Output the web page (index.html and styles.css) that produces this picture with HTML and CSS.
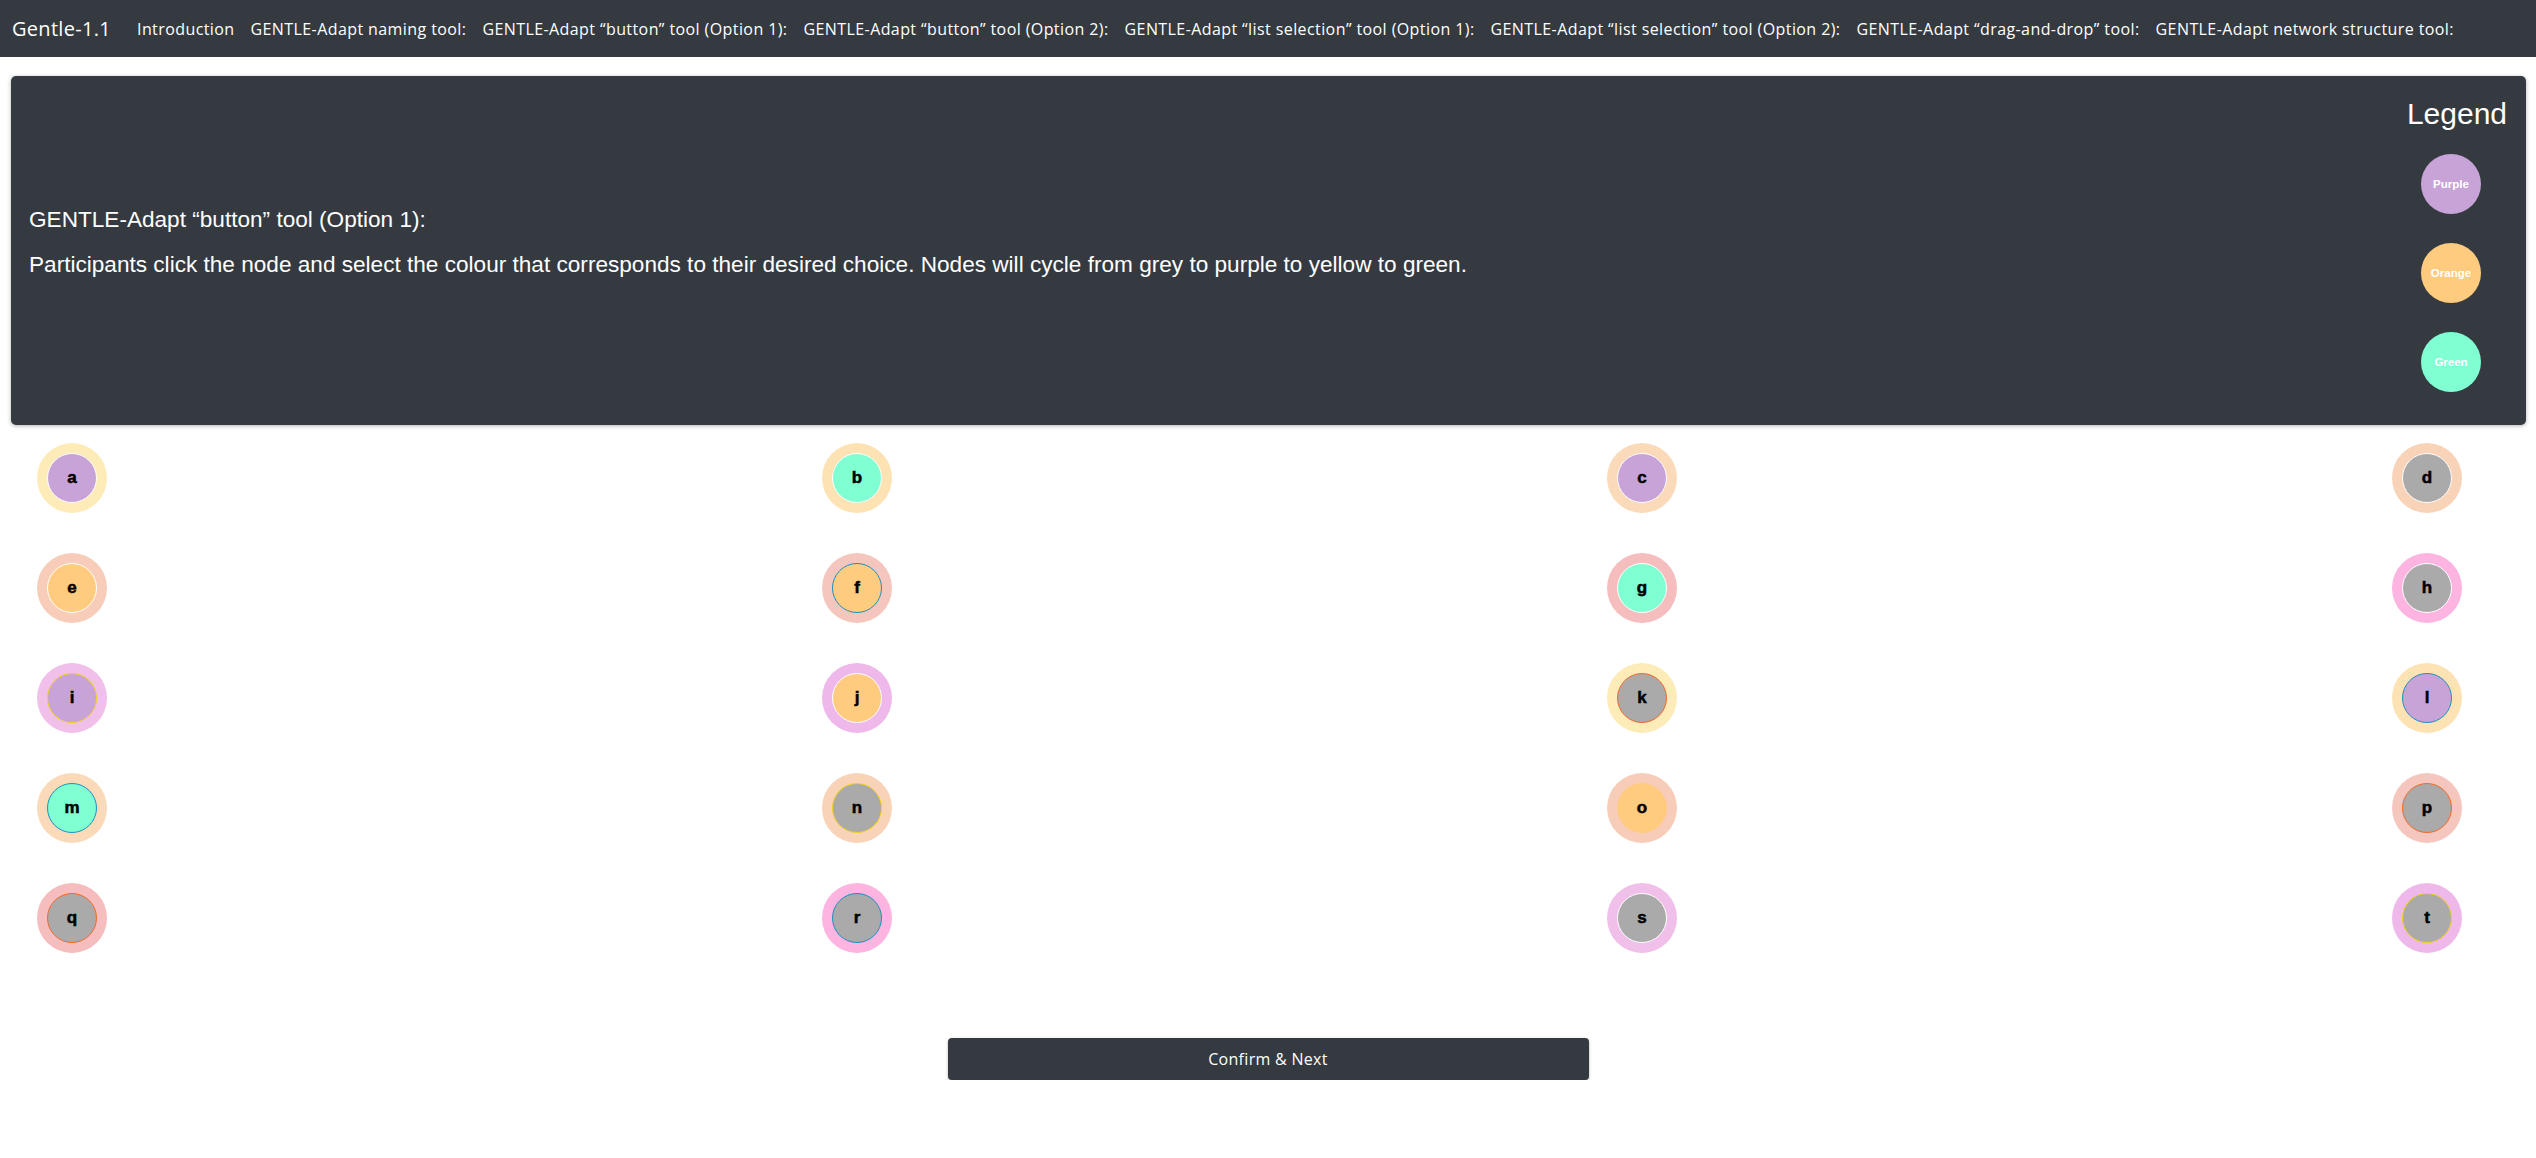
FILE: index.html
```html
<!DOCTYPE html>
<html lang="en">
<head>
<meta charset="utf-8">
<title>Gentle-1.1</title>
<link rel="stylesheet" href="styles.css">
</head>
<body>
<nav class="navbar">
  <a class="brand" href="#">Gentle-1.1</a>
  <ul class="nav">
    <li><a href="#">Introduction</a></li>
    <li><a href="#">GENTLE-Adapt naming tool:</a></li>
    <li><a href="#">GENTLE-Adapt “button” tool (Option 1):</a></li>
    <li><a href="#">GENTLE-Adapt “button” tool (Option 2):</a></li>
    <li><a href="#">GENTLE-Adapt “list selection” tool (Option 1):</a></li>
    <li><a href="#">GENTLE-Adapt “list selection” tool (Option 2):</a></li>
    <li><a href="#">GENTLE-Adapt “drag-and-drop” tool:</a></li>
    <li><a href="#">GENTLE-Adapt network structure tool:</a></li>
  </ul>
</nav>
<main>
  <section class="card">
    <div class="card-text">
      <h5 class="card-title">GENTLE-Adapt “button” tool (Option 1):</h5>
      <p class="card-desc">Participants click the node and select the colour that corresponds to their desired choice. Nodes will cycle from grey to purple to yellow to green.</p>
    </div>
    <aside class="legend">
      <h3 class="legend-title">Legend</h3>
      <div class="legend-dot fill-purple">Purple</div>
      <div class="legend-dot fill-orange">Orange</div>
      <div class="legend-dot fill-green">Green</div>
    </aside>
  </section>

  <div class="node-grid">
    <div class="node ring-1"><span class="core fill-purple edge-white">a</span></div>
    <div class="node ring-2"><span class="core fill-green edge-white">b</span></div>
    <div class="node ring-3"><span class="core fill-purple edge-white">c</span></div>
    <div class="node ring-4"><span class="core fill-grey edge-white">d</span></div>
    <div class="node ring-5"><span class="core fill-orange edge-white">e</span></div>
    <div class="node ring-6"><span class="core fill-orange edge-blue">f</span></div>
    <div class="node ring-7"><span class="core fill-green edge-white">g</span></div>
    <div class="node ring-8"><span class="core fill-grey edge-white">h</span></div>
    <div class="node ring-9"><span class="core fill-purple edge-yellow">i</span></div>
    <div class="node ring-10"><span class="core fill-orange edge-white">j</span></div>
    <div class="node ring-1"><span class="core fill-grey edge-red">k</span></div>
    <div class="node ring-2"><span class="core fill-purple edge-blue">l</span></div>
    <div class="node ring-3"><span class="core fill-green edge-blue">m</span></div>
    <div class="node ring-4"><span class="core fill-grey edge-yellow">n</span></div>
    <div class="node ring-5"><span class="core fill-orange edge-orange">o</span></div>
    <div class="node ring-6"><span class="core fill-grey edge-red">p</span></div>
    <div class="node ring-7"><span class="core fill-grey edge-red">q</span></div>
    <div class="node ring-8"><span class="core fill-grey edge-blue">r</span></div>
    <div class="node ring-9"><span class="core fill-grey edge-white">s</span></div>
    <div class="node ring-10"><span class="core fill-grey edge-yellow">t</span></div>
  </div>

  <div class="actions">
    <button class="btn" type="button">Confirm &amp; Next</button>
  </div>
</main>
</body>
</html>
```

FILE: styles.css
```css
html, body {
  margin: 0;
  padding: 0;
  background: #ffffff;
}

body {
  font-family: "Liberation Sans", Arial, sans-serif;
  color: #212529;
}

/* ---------- navbar ---------- */
.navbar {
  display: flex;
  align-items: center;
  height: 57px;
  box-sizing: border-box;
  padding: 0 12px;
  background: #343a40;
}

.brand {
  font-family: "Open Sans", "Liberation Sans", sans-serif;
  font-size: 20px;
  line-height: 30px;
  letter-spacing: 0.3px;
  color: #ffffff;
  text-decoration: none;
  margin-right: 18px;
  white-space: nowrap;
}

.nav {
  display: flex;
  list-style: none;
  margin: 0;
  padding: 0;
}

.nav a {
  display: block;
  padding: 8px;
  font-family: "Open Sans", "Liberation Sans", sans-serif;
  font-size: 16px;
  line-height: 24px;
  letter-spacing: 0.41px;
  color: #ffffff;
  text-decoration: none;
  white-space: nowrap;
}

/* ---------- card ---------- */
.card {
  display: flex;
  justify-content: space-between;
  margin: 19px 10px 0 11px;
  padding: 20px 19px 33px 18px;
  background: #343a40;
  border-radius: 5px;
  box-shadow: 0 1px 4px rgba(0, 0, 0, 0.3);
  color: #ffffff;
}

.card-text {
  align-self: center;
  padding-bottom: 4px;
}

.card-title {
  margin: 0 0 18px;
  font-size: 22.6px;
  line-height: 27px;
  font-weight: normal;
}

.card-desc {
  margin: 0;
  font-size: 22.6px;
  line-height: 27px;
}

.legend {
  display: flex;
  flex-direction: column;
  align-items: flex-end;
}

.legend-title {
  margin: 0;
  font-size: 30px;
  line-height: 36px;
  font-weight: normal;
}

.legend-dot {
  width: 60px;
  height: 60px;
  margin: 29px 26px 0 0;
  border-radius: 50%;
  display: flex;
  align-items: center;
  justify-content: center;
  font-size: 11.5px;
  font-weight: bold;
  color: #ffffff;
}

.legend-title + .legend-dot {
  margin-top: 22px;
}

/* ---------- nodes ---------- */
.node-grid {
  display: grid;
  grid-template-columns: repeat(4, 70px);
  justify-content: space-between;
  row-gap: 40px;
  padding: 18px 74px 0 37px;
}

.node {
  width: 70px;
  height: 70px;
  border-radius: 50%;
  display: flex;
  align-items: center;
  justify-content: center;
}

.core {
  width: 50px;
  height: 50px;
  box-sizing: border-box;
  border-radius: 50%;
  border: 1px solid #ffffff;
  display: flex;
  align-items: center;
  justify-content: center;
  font-size: 17px;
  font-weight: bold;
  color: #000000;
  -webkit-text-stroke: 0.5px #000000;
}

.fill-purple { background: #c8a3d8; }
.fill-orange { background: #ffcb7f; }
.fill-green  { background: #80ffd2; }
.fill-grey   { background: #aaaaaa; }

.edge-white  { border-color: #ffffff; }
.edge-blue   { border-color: #1e8fc0; }
.edge-yellow { border-color: #f2d21c; }
.edge-red    { border-color: #ee6a2a; }
.edge-orange { border-color: #ffcb7f; }

.ring-1  { background: #fdebb8; }
.ring-2  { background: #fde3b3; }
.ring-3  { background: #fadab8; }
.ring-4  { background: #f8d3b8; }
.ring-5  { background: #f7cdb9; }
.ring-6  { background: #f5c6bd; }
.ring-7  { background: #f5bdbd; }
.ring-8  { background: #fdb4e1; }
.ring-9  { background: #f0bfea; }
.ring-10 { background: #efb8ea; }

/* ---------- action ---------- */
.actions {
  display: flex;
  justify-content: center;
  margin-top: 85px;
}

.btn {
  width: 641px;
  height: 42px;
  border: none;
  border-radius: 4px;
  background: #343a40;
  color: #ffffff;
  font-family: "Open Sans", "Liberation Sans", sans-serif;
  font-size: 16px;
  letter-spacing: 0.3px;
  box-shadow: 0 1px 3px rgba(0, 0, 0, 0.3);
  cursor: pointer;
}
```
